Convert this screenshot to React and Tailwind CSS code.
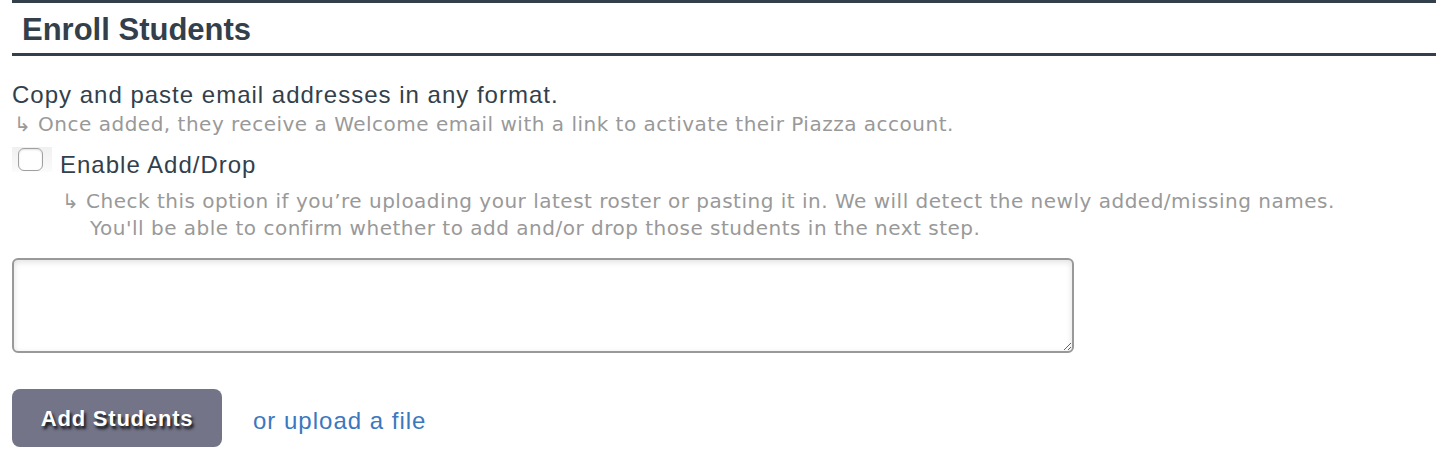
export default function App() {
  return (
    <div className="bg-white w-[1436px] h-[470px] overflow-hidden font-['Liberation_Sans',Arial,sans-serif]">
      <div className="ml-3 border-t-[3px] border-b-[3px] border-[#333f4b] h-[56px] flex items-center pl-[10px] pt-[2px]">
        <h2 className="text-[31px] font-bold text-[#333f4b] leading-none">Enroll Students</h2>
      </div>

      <div className="px-3 pt-[25px]">
        <p className="text-[24px] tracking-[1px] leading-[28px] text-[#333f4b]">Copy and paste email addresses in any format.</p>
        <p className="ml-[2px] mt-[3px] text-[20px] tracking-[0.5px] leading-[24px] text-[#999] font-['DejaVu_Sans',Verdana,sans-serif]">
          ↳ Once added, they receive a Welcome email with a link to activate their Piazza account.
        </p>

        <label className="flex items-start mt-[11px]">
          <span className="w-[40px] h-[25px] pl-[6px] bg-gradient-to-b from-[#f0f0f0] to-[#fbfbfb]">
            <span className="block mt-[1px] w-[25px] h-[23px] rounded-[6px] border border-[#a0a0a0] bg-white shadow-[inset_0_1px_2px_rgba(0,0,0,0.12)]" />
          </span>
          <span className="ml-2 mt-[4px] text-[24px] tracking-[1px] leading-[28px] text-[#333f4b]">Enable Add/Drop</span>
        </label>

        <div className="ml-[50px] mt-[9px] text-[20px] tracking-[0.5px] leading-[27px] text-[#999] font-['DejaVu_Sans',Verdana,sans-serif]">
          <p>↳ Check this option if you’re uploading your latest roster or pasting it in. We will detect the newly added/missing names.</p>
          <p className="pl-[28px]">You'll be able to confirm whether to add and/or drop those students in the next step.</p>
        </div>

        <textarea className="block mt-[16px] w-[1062px] h-[95px] rounded-[6px] border-2 border-[#999] bg-white shadow-[inset_0_2px_6px_rgba(0,0,0,0.12)] outline-none resize" />

        <div className="flex items-center mt-[36px]">
          <button className="w-[210px] h-[58px] rounded-[8px] bg-[#747489] text-white text-[22px] tracking-[0.8px] font-bold [text-shadow:2px_3px_3px_rgba(0,0,0,0.85)]">
            Add Students
          </button>
          <a className="ml-[31px] mt-[5px] text-[24px] tracking-[1px] text-[#3a78c0]">or upload a file</a>
        </div>
      </div>
    </div>
  );
}
